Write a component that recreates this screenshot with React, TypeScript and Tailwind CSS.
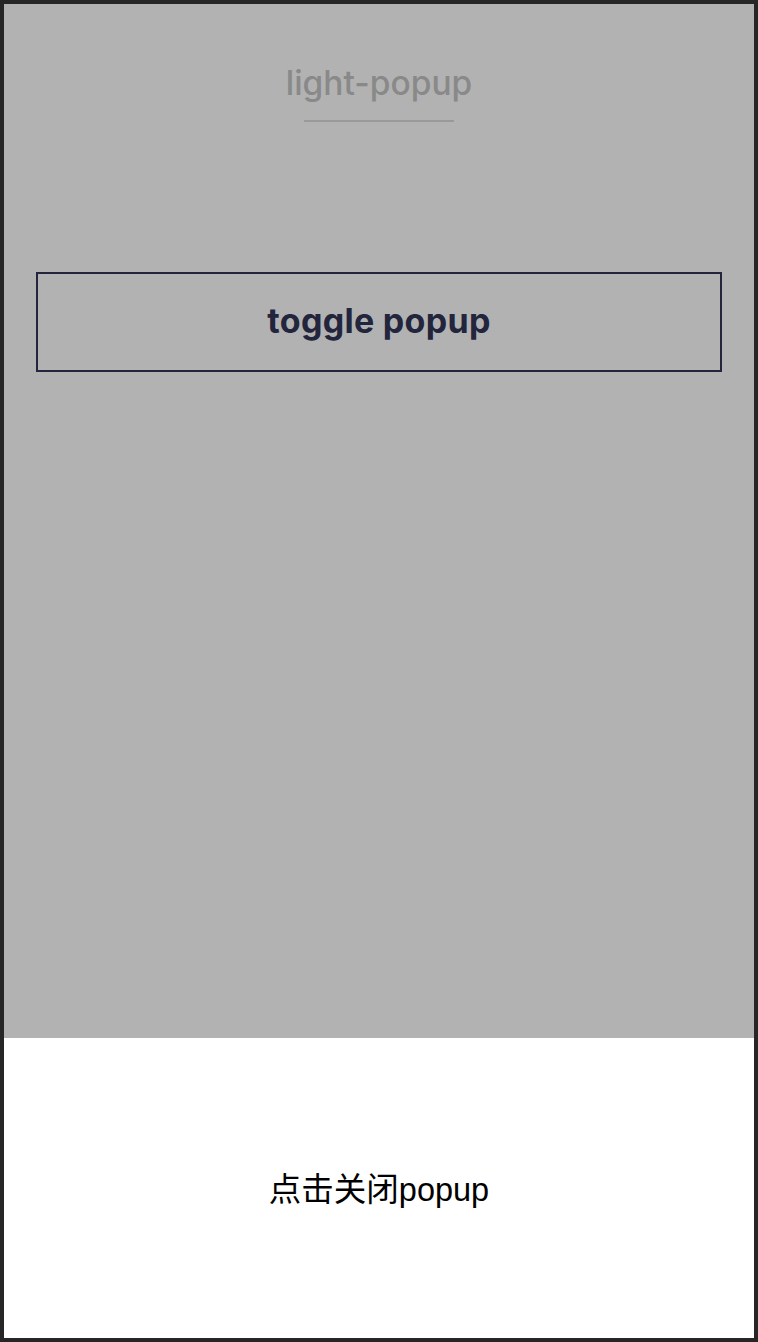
import React, { useState } from "react";

const font = { fontFamily: "Inter, 'Noto Sans', sans-serif" };

export default function App() {
    const [open, setOpen] = useState(true);

    return (
        <div className="h-[1342px] w-[758px] border-4 border-[#262626] bg-white box-border flex flex-col overflow-hidden">
            <div className={"flex-1 flex flex-col " + (open ? "bg-[#b2b2b2]" : "bg-white")}>
                {/* header */}
                <div className="flex flex-col items-center pt-[60px]">
                    <h1
                        className="text-[33.5px] leading-[38px] text-[#898989] font-medium"
                        style={font}
                    >
                        light-popup
                    </h1>
                    <div className="mt-[18px] h-[2px] w-[150px] bg-[#999999]" />
                </div>
                <div className="px-[32px] pt-[150px]">
                    <button
                        className="w-full h-[100px] border-2 border-[#23253d] text-[#23253d] text-[34px] font-bold tracking-[0.3px] pb-[4px]"
                        style={font}
                        onClick={() => setOpen(!open)}
                    >
                        toggle popup
                    </button>
                </div>
            </div>
            {open && (
                <div
                    className="h-[300px] bg-white flex items-center justify-center pt-[5px] cursor-pointer"
                    onClick={() => setOpen(false)}
                >
                    <span
                        className="text-[32.5px] text-black"
                        style={{ fontFamily: "'Liberation Sans', 'Noto Sans CJK SC', sans-serif" }}
                    >
                        点击关闭popup
                    </span>
                </div>
            )}
        </div>
    );
}
